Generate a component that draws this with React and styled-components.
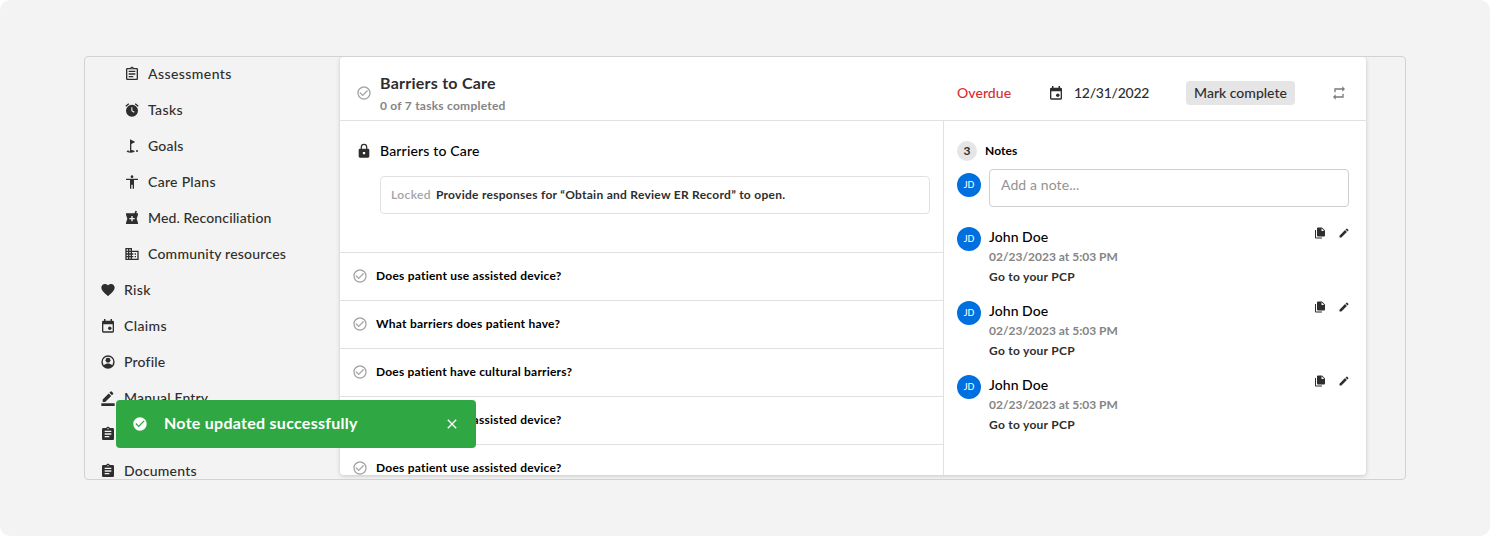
import React from "react";
import styled, { createGlobalStyle } from "styled-components";
import {
  MdOutlineAssignment, MdAssignment, MdGolfCourse, MdAccessibility, MdLocalPharmacy,
  MdDomain, MdFavorite, MdBorderColor, MdCheckCircle,
  MdCheckCircleOutline, MdClose, MdRepeat, MdEdit,
} from "react-icons/md";

const Global = createGlobalStyle`
  * { box-sizing: border-box; }
  body { margin: 0; background: #fff; font-family: Lato, "Open Sans", sans-serif; color: #2e2e2e; }
`;
const Page = styled.main`
  width: 1490px; height: 536px; padding: 56px 84px; border-radius: 10px; background: #f3f3f3; overflow: hidden;
`;
const Frame = styled.section`
  position: relative; display: flex; width: 1322px; height: 424px; overflow: hidden;
  border: 1px solid #d2d2d2; border-radius: 4px;
`;
const Sidebar = styled.nav`
  width: 255px; flex: none; display: flex; flex-direction: column;
`;
const NavItem = styled.div`
  height: 36px; flex: none; display: flex; align-items: center; gap: 8px;
  padding-left: ${(p) => (p.$nested ? 39 : 15)}px;
  &:first-child { height: 35px; padding-bottom: 1px; }
  &:last-child { padding-top: 2px; }
  svg { width: 16px; height: 16px; flex: none; }
`;
const Text = styled.span`
  display: block; white-space: nowrap;
  font-size: ${(p) => p.$size || 14}px;
  line-height: ${(p) => p.$line || 20}px;
  font-weight: ${(p) => p.$weight || 500};
  color: ${(p) => p.$color || "#2e2e2e"};
  letter-spacing: ${(p) => p.$track || 0}px;
`;
const Card = styled.article`
  width: 1026px; height: 418px; flex: none; display: flex; flex-direction: column; overflow: hidden;
  background: #fff; border-radius: 4px; box-shadow: 0 1px 4px rgba(0, 0, 0, 0.18);
`;
const CardHeader = styled.header`
  height: 64px; flex: none; display: flex; align-items: center; border-bottom: 1px solid #e1e1e1;
  padding: 8px 19px 0 16px;
`;
const Status = styled.div`
  width: 16px; height: 16px; flex: none; color: #a6a6a6;
  svg { display: block; width: 16px; height: 16px; }
`;
const Heading = styled.div`
  width: 577px; margin-left: 8px; padding-top: 4px;
`;
const DueDate = styled.div`
  display: flex; align-items: center; gap: 10px; width: 138px;
  svg { width: 16px; height: 16px; }
`;
const DueState = styled.div`
  width: 91px;
`;
const Button = styled.button`
  width: 109px; height: 24px; padding: 0 8px; border: 0; border-radius: 4px; background: #e5e5e5; font-family: inherit;
`;
const RepeatIcon = styled(MdRepeat)`
  width: 16px; height: 16px; margin-left: auto; color: #7a7a7a;
`;
const CardBody = styled.div`
  flex: 1; min-height: 0; display: flex;
`;
const Questions = styled.div`
  width: 604px; border-right: 1px solid #e1e1e1;
`;
const LockedSection = styled.section`
  height: 131px; padding: 20px 13px 0 16px;
`;
const LockedTitle = styled.div`
  display: flex; align-items: center; gap: 8px;
  svg { width: 16px; height: 16px; }
`;
const LockedBox = styled.div`
  height: 38px; margin: 15px 0 0 24px; padding: 0 10px; display: flex; align-items: center; gap: 5px;
  border: 1px solid #e1e1e1; border-radius: 4px;
`;
const Question = styled.div`
  height: 48px; display: flex; align-items: center; gap: 8px; padding: 0 12px 1px; border-top: 1px solid #e1e1e1;
`;
const Notes = styled.aside`
  flex: 1; padding: 20px 17px 0 13px;
`;
const NotesTitle = styled.div`
  display: flex; align-items: center; gap: 8px;
`;
const Count = styled.span`
  width: 20px; height: 20px; display: grid; place-items: center; border-radius: 50%; background: #e5e5e5;
`;
const Composer = styled.div`
  display: flex; gap: 8px; margin-top: 8px;
`;
const Avatar = styled.div`
  width: 24px; height: 24px; flex: none; margin-top: ${(p) => p.$top || 0}px;
  display: grid; place-items: center; border-radius: 50%; background: #0070e0;
`;
const NoteInput = styled.div`
  flex: 1; height: 38px; padding: 5px 11px; border: 1px solid #cfcfcf; border-radius: 4px;
`;
const NoteList = styled.div`
  display: flex; flex-direction: column; margin-top: 20px;
`;
const Note = styled.div`
  display: flex; gap: 8px; height: 74px;
`;
const NoteContent = styled.div`
  flex: 1;
`;
const NoteActions = styled.div`
  display: flex; gap: 12px; margin-right: -1px;
  svg { width: 12px; height: 12px; }
`;
const Toast = styled.div`
  position: absolute; left: 31px; top: 343px; width: 360px; height: 48px; padding: 0 16px;
  display: flex; align-items: center; border-radius: 4px; background: #2fa844; color: #fff;
  svg { width: 16px; height: 16px; }
`;
const ToastMessage = styled.div`
  flex: 1; margin-left: 16px; padding-bottom: 2px;
`;

const TasksIcon = () => (
  <svg viewBox="0 0 24 24" fill="currentColor">
    <path fillRule="evenodd" d="M12 4a9 9 0 1 0 0 18 9 9 0 0 0 0-18Zm-1 4h1.6v4.6l3.4 2-1 1.4-4-2.4Z" />
    <path d="m7.9 3.4-1.3-1.5L2 5.8l1.3 1.5ZM22 5.7l-4.6-3.9-1.3 1.5 4.6 3.9Z" />
  </svg>
);
const ProfileIcon = () => (
  <svg viewBox="0 0 24 24" fill="currentColor">
    <path fillRule="evenodd" d="M12 2a10 10 0 1 0 0 20 10 10 0 0 0 0-20Zm0 2a8 8 0 0 1 6.4 12.8C17 15 13.6 14.3 12 14.3S7 15 5.6 16.8A8 8 0 0 1 12 4Z" />
    <circle cx="12" cy="9.5" r="3.7" />
  </svg>
);
const CalendarIcon = () => (
  <svg viewBox="0 0 24 24" fill="currentColor">
    <path fillRule="evenodd" d="M6 1.5h2.2V4h7.6V1.5H18V4h1a2 2 0 0 1 2 2v14a2 2 0 0 1-2 2H5a2 2 0 0 1-2-2V6a2 2 0 0 1 2-2h1ZM5 9.5V20h14V9.5Z" />
    <circle cx="14.7" cy="15.5" r="2.6" />
  </svg>
);
const LockIcon = () => (
  <svg viewBox="0 0 24 24" fill="currentColor">
    <path fillRule="evenodd" d="M18 8.5h-1V6.2A5 5 0 0 0 7 6.2v2.3H6a2 2 0 0 0-2 2V20a2 2 0 0 0 2 2h12a2 2 0 0 0 2-2v-9.5a2 2 0 0 0-2-2ZM8.9 6.2a3.1 3.1 0 0 1 6.2 0v2.3H8.9Zm1.4 7.3h3.4v3.4h-3.4Z" />
  </svg>
);
const CopyIcon = () => (
  <svg viewBox="0 0 24 24" fill="currentColor">
    <path d="M2 6h2v15h12v2H4a2 2 0 0 1-2-2Z" />
    <path fillRule="evenodd" d="M8 1h8l6 6v10a2 2 0 0 1-2 2H8a2 2 0 0 1-2-2V3a2 2 0 0 1 2-2Zm7 1.5V8h5.5Z" />
  </svg>
);

const nav = [
  ["Assessments", MdOutlineAssignment, true, 0.43],
  ["Tasks", TasksIcon, true, 0.4],
  ["Goals", MdGolfCourse, true, 0.2],
  ["Care Plans", MdAccessibility, true, 0.3],
  ["Med. Reconciliation", MdLocalPharmacy, true, 0.12],
  ["Community resources", MdDomain, true, 0.22],
  ["Risk", MdFavorite, false, 0.35],
  ["Claims", CalendarIcon, false, 0.35],
  ["Profile", ProfileIcon, false, 0.18],
  ["Manual Entry", MdBorderColor, false, 0.15],
  ["", MdAssignment, false, 0],
  ["Documents", MdAssignment, false, 0.2],
];
const questions = [
  ["Does patient use assisted device?", 0.23],
  ["What barriers does patient have?", 0.25],
  ["Does patient have cultural barriers?", 0.2],
  ["Does patient use assisted device?", 0.23],
  ["Does patient use assisted device?", 0.23],
];

const Initials = ({ top }) => (
  <Avatar $top={top}><Text $size={9} $line={12} $color="#fff" $weight={500}>JD</Text></Avatar>
);

export default function App() {
  return (
    <Page>
      <Global />
      <Frame>
        <Sidebar>
          {nav.map(([label, Icon, nested, track], i) => (
            <NavItem key={i} $nested={nested}>
              <Icon />
              {label && <Text $track={track}>{label}</Text>}
            </NavItem>
          ))}
        </Sidebar>
        <Card>
          <CardHeader>
            <Status><MdCheckCircleOutline /></Status>
            <Heading>
              <Text $size={16} $line={22} $weight={700} $track={0.25}>Barriers to Care</Text>
              <Text $size={12} $line={24} $weight={700} $color="#858585" $track={0.24}>0 of 7 tasks completed</Text>
            </Heading>
            <DueState><Text $color="#d92d2f" $track={0.07}>Overdue</Text></DueState>
            <DueDate><CalendarIcon /><Text $track={-0.25}>12/31/2022</Text></DueDate>
            <Button><Text $track={0}>Mark complete</Text></Button>
            <RepeatIcon />
          </CardHeader>
          <CardBody>
            <Questions>
              <LockedSection>
                <LockedTitle><LockIcon /><Text $color="#000" $track={0.17}>Barriers to Care</Text></LockedTitle>
                <LockedBox>
                  <Text $size={12} $weight={600} $color="#a3a3a3" $track={0.4}>Locked</Text>
                  <Text $size={12} $weight={700} $track={0.27}>Provide responses for “Obtain and Review ER Record” to open.</Text>
                </LockedBox>
              </LockedSection>
              {questions.map(([q, track], i) => (
                <Question key={i}>
                  <Status><MdCheckCircleOutline /></Status>
                  <Text $size={12} $weight={700} $color="#000" $track={track}>{q}</Text>
                </Question>
              ))}
            </Questions>
            <Notes>
              <NotesTitle>
                <Count><Text $size={12} $weight={700}>3</Text></Count>
                <Text $size={12} $weight={700} $color="#000" $track={0.1}>Notes</Text>
              </NotesTitle>
              <Composer>
                <Initials top={4} />
                <NoteInput><Text $color="#929292" $weight={400} $track={0.1}>Add a note...</Text></NoteInput>
              </Composer>
              <NoteList>
                {[1, 2, 3].map((id) => (
                  <Note key={id}>
                    <Initials />
                    <NoteContent>
                      <Text $color="#000" $track={0.05}>John Doe</Text>
                      <Text $size={12} $weight={700} $color="#858585" $track={0}>02/23/2023 at 5:03 PM</Text>
                      <Text $size={12} $weight={700} $track={0.27}>Go to your PCP</Text>
                    </NoteContent>
                    <NoteActions><CopyIcon /><MdEdit /></NoteActions>
                  </Note>
                ))}
              </NoteList>
            </Notes>
          </CardBody>
        </Card>
        <Toast>
          <MdCheckCircle />
          <ToastMessage><Text $size={16} $line={24} $weight={700} $color="#fff" $track={0.27}>Note updated successfully</Text></ToastMessage>
          <MdClose />
        </Toast>
      </Frame>
    </Page>
  );
}
